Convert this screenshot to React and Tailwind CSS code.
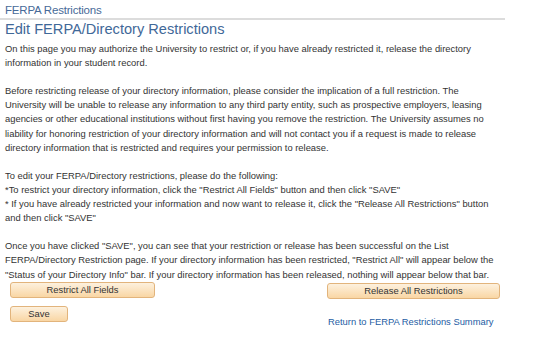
import React from "react";

const Btn = ({ children, className = "" }) => (
  <button
    className={`h-[16px] rounded-[3px] border border-[#e2b47c] bg-gradient-to-b from-[#fdf1de] to-[#f9d6a4] text-[9.4px] leading-none text-[#333] ${className}`}
  >
    {children}
  </button>
);

const App = () => {
  return (
    <div
      className="min-h-screen bg-white text-[#333]"
      style={{ fontFamily: '"Liberation Sans", Arial, sans-serif' }}
    >
      {/* Page title */}
      <div className="w-[505px] border-b-2 border-[#dcdcdc] pl-[5px] pt-[3px] pb-[1px]">
        <h1 className="text-[11.5px] leading-[14px] text-[#476a98] tracking-[-0.2px]">FERPA Restrictions</h1>
      </div>
      <h2 className="pl-[5px] text-[14.6px] leading-[18px] text-[#3f6898]">
        Edit FERPA/Directory Restrictions
      </h2>

      {/* Instructions */}
      <div className="w-[501px] pl-[5px] pt-[4px] text-[9.4px] leading-[14.1px]">
        <p>
          On this page you may authorize the University to restrict or, if you have already restricted it, release the
          directory information in your student record.
        </p>
        <br />
        <p>
          Before restricting release of your directory information, please consider the implication of a full
          restriction. The University will be unable to release any information to any third party entity, such as
          prospective employers, leasing agencies or other educational institutions without first having you remove the
          restriction. The University assumes no liability for honoring restriction of your directory information and
          will not contact you if a request is made to release directory information that is restricted and requires
          your permission to release.
        </p>
        <br />
        <p>
          To edit your FERPA/Directory restrictions, please do the following:
          <br />
          *To restrict your directory information, click the "Restrict All Fields" button and then click "SAVE"
          <br />
          * If you have already restricted your information and now want to release it, click the "Release All
          Restrictions" button and then click "SAVE"
        </p>
        <br />
        <p>
          Once you have clicked "SAVE", you can see that your restriction or release has been successful on the List
          FERPA/Directory Restriction page. If your directory information has been restricted, "Restrict All" will
          appear below the "Status of your Directory Info" bar. If your directory information has been released, nothing
          will appear below that bar.
        </p>
      </div>

      {/* Actions */}
      <div className="flex w-[500px] items-start justify-between pl-[10px]">
        <Btn className="w-[145px]">Restrict All Fields</Btn>
        <Btn className="mt-[1px] w-[173px]">Release All Restrictions</Btn>
      </div>
      <div className="mt-[7px] flex w-[500px] items-end pl-[10px]">
        <Btn className="w-[58px]">Save</Btn>
        <a href="#" className="ml-[260px] mb-[-6px] whitespace-nowrap text-[9.4px] leading-[12px] text-[#1d5ca3]">
          Return to FERPA Restrictions Summary
        </a>
      </div>
    </div>
  );
};

export default App;
